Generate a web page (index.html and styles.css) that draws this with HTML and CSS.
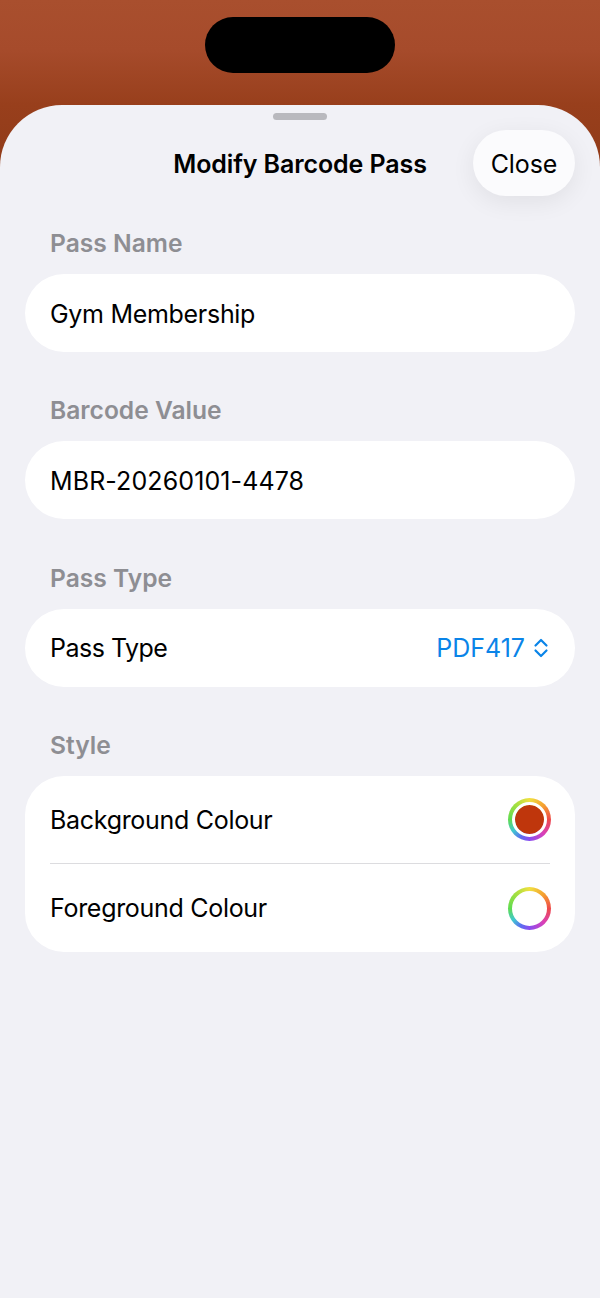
FILE: index.html
```html
<!DOCTYPE html>
<html lang="en">
<head>
<meta charset="utf-8">
<title>Modify Barcode Pass</title>
<link rel="stylesheet" href="styles.css">
</head>
<body>
<div class="screen">
  <div class="island"></div>
  <main class="sheet">
    <div class="grabber"></div>
    <header class="nav">
      <h1 class="title">Modify Barcode Pass</h1>
      <button class="close">Close</button>
    </header>
    <section class="group">
      <h2 class="label">Pass Name</h2>
      <div class="card"><div class="row row-raised">Gym Membership</div></div>
    </section>
    <section class="group">
      <h2 class="label">Barcode Value</h2>
      <div class="card"><div class="row row-code row-raised">MBR-20260101-4478</div></div>
    </section>
    <section class="group">
      <h2 class="label">Pass Type</h2>
      <div class="card">
        <div class="row">
          <span class="type-name">Pass Type</span>
          <span class="picker"><span class="picker-value">PDF417</span>
            <svg class="chevrons" viewBox="0 0 16 24" width="16" height="24" aria-hidden="true"><path d="M2.500 9.500 8 4 13.500 9.500M2.500 14.500 8 20 13.500 14.500"/></svg>
          </span>
        </div>
      </div>
    </section>
    <section class="group">
      <h2 class="label">Style</h2>
      <div class="card">
        <div class="row row-split">
          <span>Background Colour</span>
          <span class="well"><span class="swatch"></span></span>
        </div>
        <div class="divider"></div>
        <div class="row row-split">
          <span>Foreground Colour</span>
          <span class="well"><span class="swatch swatch-white"></span></span>
        </div>
      </div>
    </section>
  </main>
</div>
</body>
</html>
```
FILE: styles.css
```css
* { box-sizing: border-box; }
html, body { margin: 0; padding: 0; }
body {
  width: 600px;
  height: 1298px;
  overflow: hidden;
  font-family: Inter, "Liberation Sans", sans-serif;
  color: #000;
}
.screen {
  position: relative;
  height: 1298px;
  padding-top: 105px;
  background: linear-gradient(180deg, #a94f2e 0, #a64b2b 50px, #983f1c 105px, #8f3a18 180px);
}
.island {
  position: absolute;
  left: 205px;
  top: 17px;
  width: 190px;
  height: 56px;
  border-radius: 28px;
  background: #000;
}
.sheet {
  height: 1193px;
  padding: 8px 25px 0;
  background: #f1f1f6;
  border-radius: 62px 62px 0 0;
}
.grabber {
  width: 54px;
  height: 7px;
  margin: 0 auto;
  border-radius: 4px;
  background: #b9b9be;
}
.nav {
  display: grid;
  grid-template-columns: 1fr auto 1fr;
  align-items: center;
  height: 66px;
  margin-top: 10px;
}
.title {
  grid-column: 2;
  margin: 0;
  padding-top: 2px;
  font-size: 25px;
  font-weight: 600;
  letter-spacing: -0.1px;
}
.close {
  grid-column: 3;
  justify-self: end;
  width: 102px;
  height: 66px;
  padding: 2px 0 0;
  border: 0;
  border-radius: 33px;
  background: #fbfbfd;
  box-shadow: 0 6px 24px rgba(0, 0, 0, 0.07);
  font: 400 25px Inter, "Liberation Sans", sans-serif;
  letter-spacing: -0.1px;
  color: #000;
}
.group { margin-top: 43.330px; }
.nav + .group { margin-top: 32px; }
.label {
  margin: 0 0 16px 25px;
  font-size: 24.600px;
  line-height: 30px;
  font-weight: 600;
  color: #8e8e93;
}
.card {
  background: #fff;
  border-radius: 39px;
  padding: 0 25px;
}
.row {
  display: flex;
  align-items: center;
  justify-content: space-between;
  height: 78px;
  font-size: 25px;
  letter-spacing: -0.3px;
}
.row-raised { padding-top: 2px; }
.row-code { letter-spacing: 0.1px; }
.row-split { height: 87.500px; }
.type-name { letter-spacing: -0.5px; }
.picker {
  display: flex;
  align-items: center;
  gap: 8px;
  margin-right: 1px;
  color: #0a84e8;
}
.picker-value { letter-spacing: 0; }
.chevrons {
  fill: none;
  stroke: currentColor;
  stroke-width: 2.200;
  stroke-linecap: round;
  stroke-linejoin: round;
}
.divider {
  height: 1px;
  background: #dcdcdf;
}
.well {
  display: flex;
  align-items: center;
  justify-content: center;
  width: 43px;
  height: 43px;
  margin-right: -1px;
  border-radius: 50%;
  background: conic-gradient(#f0e040, #f5a030, #ee4a4a, #d940b8, #8a4df0 180deg, #5a70f0, #40c8d0 235deg, #5fdc50 270deg, #a8e040 320deg, #f0e040);
}
.swatch {
  width: 35px;
  height: 35px;
  border: 3.500px solid #fff;
  border-radius: 50%;
  background: #bf360c;
  background-clip: padding-box;
}
.swatch-white { background: #fff; }
```
